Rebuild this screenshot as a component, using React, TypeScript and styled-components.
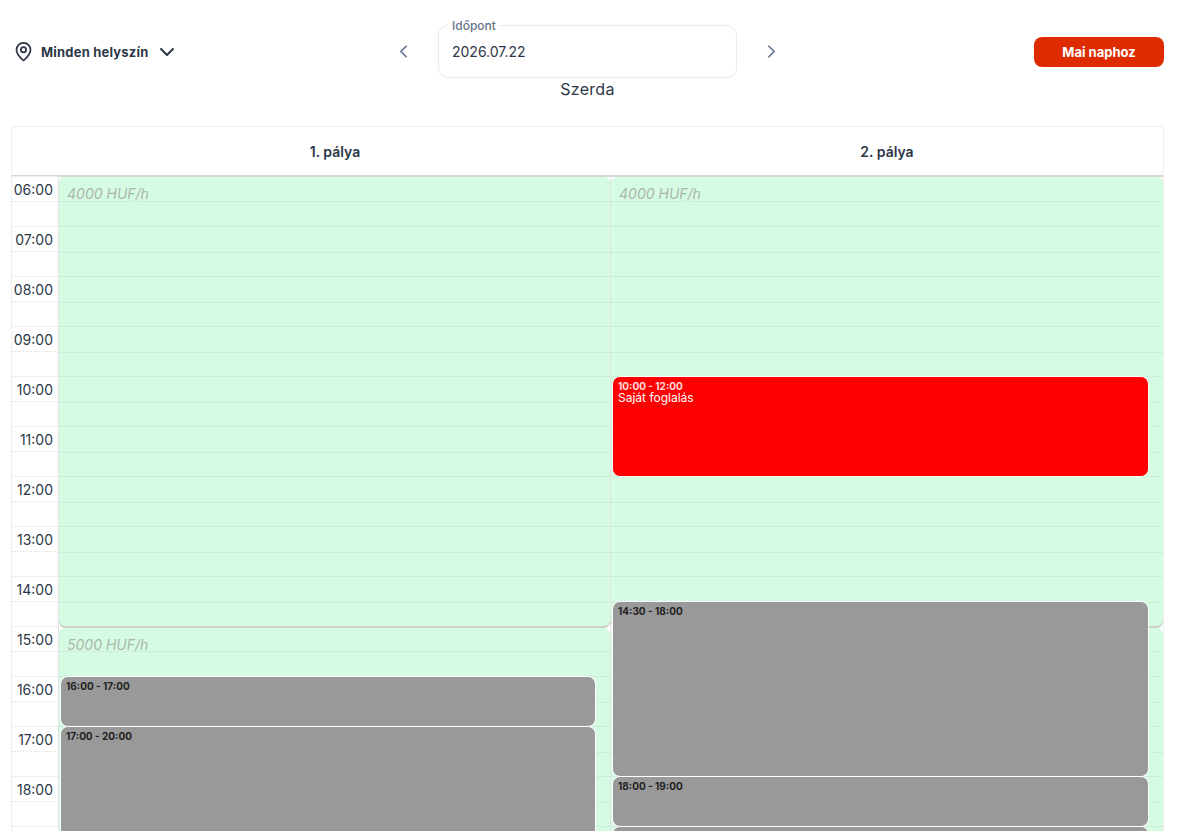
import React from 'react';
import styled, { createGlobalStyle } from 'styled-components';
import { ChevronDown, ChevronLeft, ChevronRight, MapPin } from 'lucide-react';

const HOUR_HEIGHT = 50;
const FIRST_HOUR = 6;
const HOURS = Array.from({ length: 16 }, (_, i) => FIRST_HOUR + i);

type Booking = {
  from: number;
  to: number;
  label: string;
  title?: string;
  own?: boolean;
};

type Court = {
  name: string;
  bookings: Booking[];
};

const COURTS: Court[] = [
  {
    name: '1. pálya',
    bookings: [
      { from: 16, to: 17, label: '16:00 - 17:00' },
      { from: 17, to: 20, label: '17:00 - 20:00' },
    ],
  },
  {
    name: '2. pálya',
    bookings: [
      { from: 10, to: 12, label: '10:00 - 12:00', title: 'Saját foglalás', own: true },
      { from: 14.5, to: 18, label: '14:30 - 18:00' },
      { from: 18, to: 19, label: '18:00 - 19:00' },
      { from: 19, to: 21, label: '' },
    ],
  },
];

function pad(hour: number) {
  return `${String(hour).padStart(2, '0')}:00`;
}

function App() {
  return (
    <Page>
      <GlobalStyle />
      <Toolbar>
        <LocationPicker>
          <MapPin size={21} strokeWidth={2} />
          <LocationName>Minden helyszín</LocationName>
          <ChevronDown size={24} strokeWidth={2} />
        </LocationPicker>
        <DateBlock>
          <DateRow>
            <ArrowButton type="button"><ChevronLeft size={21} strokeWidth={2} /></ArrowButton>
            <DateField>
              <DateLabel>Időpont</DateLabel>
              <DateValue>2026.07.22</DateValue>
            </DateField>
            <ArrowButton type="button"><ChevronRight size={21} strokeWidth={2} /></ArrowButton>
          </DateRow>
          <DayName>Szerda</DayName>
        </DateBlock>
        <TodayButton type="button">Mai naphoz</TodayButton>
      </Toolbar>
      <Calendar>
        <CalendarHead>
          <HeadGutter />
          {COURTS.map((court) => (
            <CourtName key={court.name}>{court.name}</CourtName>
          ))}
        </CalendarHead>
        <CalendarBody>
          <TimeColumn>
            {HOURS.map((hour) => (
              <TimeCell key={hour}>{pad(hour)}</TimeCell>
            ))}
          </TimeColumn>
          {COURTS.map((court) => (
            <CourtColumn key={court.name}>
              <PriceBand $hours={9}><PriceLabel>4000 HUF/h</PriceLabel></PriceBand>
              <PriceBand $hours={7}><PriceLabel>5000 HUF/h</PriceLabel></PriceBand>
              <SlotLayer>
                {HOURS.map((hour) => <SlotRow key={hour} />)}
              </SlotLayer>
              {court.bookings.map((booking) => (
                <BookingCard
                  key={booking.from}
                  $own={booking.own}
                  style={{
                    top: (booking.from - FIRST_HOUR) * HOUR_HEIGHT,
                    height: (booking.to - booking.from) * HOUR_HEIGHT + 1,
                  }}
                >
                  <BookingTime $own={booking.own}>{booking.label}</BookingTime>
                  {booking.title && <BookingTitle>{booking.title}</BookingTitle>}
                </BookingCard>
              ))}
            </CourtColumn>
          ))}
        </CalendarBody>
      </Calendar>
    </Page>
  );
}

const GlobalStyle = createGlobalStyle`
  html, body {
    margin: 0;
    height: 100%;
    overflow: hidden;
    background: #fff;
  }
  body {
    font-family: Inter, "Liberation Sans", sans-serif;
    color: #2d3748;
  }
`;

const Page = styled.div`
  height: 831px;
  overflow: hidden;
  padding: 25px 13px 0 11px;
  box-sizing: border-box;
`;

const Toolbar = styled.div`
  display: grid;
  grid-template-columns: 1fr auto 1fr;
  align-items: start;
  height: 101px;
`;

const LocationPicker = styled.div`
  display: flex;
  align-items: center;
  height: 53px;
  padding-left: 2px;
  color: #2d3748;
`;

const LocationName = styled.span`
  margin: 0 6px 0 7px;
  font-size: 13px;
  font-weight: 700;
  letter-spacing: 0.2px;
`;

const DateBlock = styled.div`
  display: flex;
  flex-direction: column;
  align-items: center;
`;

const DateRow = styled.div`
  display: flex;
  align-items: center;
  gap: 24px;
`;

const ArrowButton = styled.button`
  display: flex;
  padding: 0;
  border: none;
  background: none;
  color: #64748b;
`;

const DateField = styled.div`
  position: relative;
  width: 299px;
  height: 53px;
  box-sizing: border-box;
  display: flex;
  align-items: center;
  padding-left: 13px;
  border: 1px solid #e8eaed;
  border-radius: 10px;
`;

const DateLabel = styled.span`
  position: absolute;
  top: -8px;
  left: 9px;
  padding: 0 4px;
  background: #fff;
  font-size: 12px;
  line-height: 15px;
  font-weight: 500;
  color: #64748b;
`;

const DateValue = styled.span`
  font-size: 14px;
  color: #2d3748;
`;

const DayName = styled.div`
  margin-top: 1px;
  font-size: 16px;
  line-height: 21px;
  letter-spacing: 0.3px;
  color: #2d3748;
`;

const TodayButton = styled.button`
  justify-self: end;
  width: 130px;
  height: 30px;
  margin-top: 12px;
  padding: 0;
  border: none;
  border-radius: 8px;
  background: #de2c00;
  color: #fff;
  font-family: inherit;
  font-size: 13px;
  font-weight: 700;
`;

const Calendar = styled.div`
  border: 1px solid #eeeeee;
  border-bottom: none;
  border-left-width: 1px;
`;

const CalendarHead = styled.div`
  display: grid;
  grid-template-columns: 47px 552px 1fr;
  height: 48px;
  border-bottom: 2px solid #d6d6d6;
`;

const HeadGutter = styled.div``;

const CourtName = styled.div`
  display: flex;
  align-items: center;
  justify-content: center;
  font-size: 14px;
  font-weight: 600;
  color: #2d3748;
`;

const CalendarBody = styled.div`
  display: grid;
  grid-template-columns: 47px 552px 1fr;
`;

const TimeColumn = styled.div`
  margin-top: -1px;
  border-right: 1px solid #e4e4e4;
`;

const TimeCell = styled.div`
  position: relative;
  height: ${HOUR_HEIGHT}px;
  box-sizing: border-box;
  padding: 3px 5px 0 0;
  border-top: 1px solid #eeeeee;
  text-align: right;
  font-size: 14px;
  line-height: 20px;
  color: #2d3748;

  &::after {
    content: '';
    position: absolute;
    left: 0;
    right: 0;
    top: 24px;
    border-top: 1px dotted #e2e2e2;
  }
`;

const CourtColumn = styled.div`
  position: relative;
  display: flex;
  flex-direction: column;
  border-right: 1px solid #e4e4e4;

  &:last-child {
    border-right: none;
  }
`;

const PriceBand = styled.div<{ $hours: number }>`
  height: ${(p) => p.$hours * HOUR_HEIGHT - 1}px;
  box-sizing: border-box;
  padding: 8px;
  border-radius: 6px;
  background: #d5fce3;

  & + & {
    margin-top: 2px;
    position: relative;
  }

  &:first-child {
    box-shadow: 0 1px 0 #cfcfcf, 0 2px 0 #cfcfcf;
  }
`;

const PriceLabel = styled.span`
  font-size: 14px;
  line-height: 17px;
  font-style: italic;
  color: #abb5ae;
  display: block;
`;

const SlotLayer = styled.div`
  position: absolute;
  top: -1px;
  left: 0;
  right: 0;
  bottom: 0;
  overflow: hidden;
  pointer-events: none;
`;

const SlotRow = styled.div`
  position: relative;
  height: ${HOUR_HEIGHT}px;
  box-sizing: border-box;

  &:not(:first-child):not(:nth-child(10)) {
    border-top: 1px solid rgba(0, 0, 0, 0.05);
  }

  &::after {
    content: '';
    position: absolute;
    left: 0;
    right: 0;
    top: 25px;
    border-top: 1px dotted rgba(0, 0, 0, 0.09);
  }
`;

const BookingCard = styled.div<{ $own?: boolean }>`
  position: absolute;
  left: 1px;
  right: 14px;
  margin-top: -1px;
  box-sizing: border-box;
  padding: 3px 5px;
  border: 1px solid #fff;
  border-radius: 8px;
  background: ${(p) => (p.$own ? '#ff0000' : '#999999')};
  color: ${(p) => (p.$own ? '#ffffff' : '#222222')};
`;

const BookingTime = styled.div<{ $own?: boolean }>`
  font-size: 10px;
  line-height: 12px;
  font-weight: 700;
  opacity: ${(p) => (p.$own ? 0.85 : 1)};
`;

const BookingTitle = styled.div`
  font-size: 12px;
  line-height: 12px;
`;

export default App;
